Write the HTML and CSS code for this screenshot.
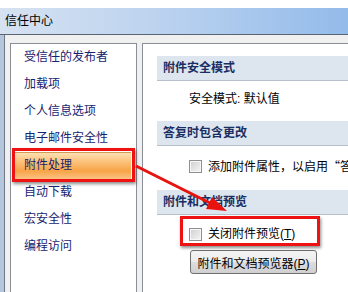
FILE: index.html
```html
<!DOCTYPE html>
<html lang="zh-CN">
<head>
    <meta charset="UTF-8">
    <title>信任中心</title>
    <link rel="stylesheet" href="styles.css">
</head>
<body>
    <div class="window">
        <div class="titlebar">信任中心</div>

        <div class="frame">
            <!-- Left category list -->
            <ul class="nav">
                <li>受信任的发布者</li>
                <li>加载项</li>
                <li>个人信息选项</li>
                <li>电子邮件安全性</li>
                <li class="selected">附件处理</li>
                <li>自动下载</li>
                <li>宏安全性</li>
                <li>编程访问</li>
            </ul>

            <!-- Right settings panel -->
            <div class="content">
                <div class="section-head">附件安全模式</div>
                <div class="section-body">
                    <div class="row">安全模式: 默认值</div>
                </div>

                <div class="section-head">答复时包含更改</div>
                <div class="section-body">
                    <label class="row"><span class="check"></span><span class="cjk">添加附件属性，以启用“答复时包含更改”</span></label>
                </div>

                <div class="section-head">附件和文档预览</div>
                <div class="section-body last">
                    <label class="row marked"><span class="check"></span><span>关闭附件预览(<u>T</u>)</span></label>
                    <button class="btn">附件和文档预览器(<u>P</u>)</button>
                </div>
            </div>
        </div>

        <svg class="arrow" width="348" height="292" viewBox="0 0 348 292">
            <line x1="136" y1="166" x2="214" y2="205" stroke="#e8130f" stroke-width="3"/>
            <polygon points="227,211 206,209 212,197" fill="#e8130f"/>
        </svg>
    </div>
</body>
</html>
```

FILE: styles.css
```css
body {
    margin: 0;
    padding: 0;
    font-family: "Liberation Sans", "Noto Sans CJK SC", sans-serif;
    font-size: 12px;
}

.window {
    position: relative;
    width: 348px;
    height: 292px;
    overflow: hidden;
    background: #f0f0f0;
}

.titlebar {
    height: 26px;
    padding: 8px 0 0 5px;
    line-height: 26px;
    font-size: 12px;
    color: #000;
    background: linear-gradient(to right, #d6e2f1, #bcd3ef 45%, #93bbea);
    box-shadow: inset 0 8px 0 #fff;
    border-bottom: 1px solid #5a6472;
}

.frame {
    display: flex;
    gap: 5px;
    height: 257px;
    padding: 8px 0 0 6px;
    border-left: 4px solid #b3c6dc;
    box-shadow: inset 1px 0 0 #6f7886;
    box-sizing: border-box;
}

.nav {
    list-style: none;
    margin: 0;
    padding: 0;
    width: 125px;
    flex: none;
    background: #fff;
    border: 1px solid #8a8e96;
    border-bottom: none;
}

.nav li {
    height: 27px;
    line-height: 27px;
    padding-left: 13px;
    color: #17236f;
    white-space: nowrap;
}

.nav li.selected {
    position: relative;
    margin: 0 5px 0 4px;
    padding-left: 9px;
    background: linear-gradient(to bottom, #fde3b8, #fbc27c 35%, #f8a448 70%, #fbc283);
    box-shadow: inset 0 1px 0 #d29a52;
}

.nav li.selected::after {
    content: "";
    position: absolute;
    left: -3px;
    top: -4px;
    right: -4px;
    bottom: -3px;
    border: 3px solid #ee1212;
    box-shadow: 1px 2px 3px rgba(0, 0, 0, 0.45);
}

.content {
    flex: none;
    width: 320px;
    padding: 12px 0 0 14px;
    background: #fff;
    border: 1px solid #8a8e96;
    border-right: none;
    border-bottom: none;
}

.section-head {
    height: 24px;
    line-height: 24px;
    padding-left: 6px;
    font-weight: bold;
    color: #1b2e63;
    background: #dde6ee;
    border-bottom: 1px solid #b7bfca;
}

.section-body {
    padding: 10px 0 14px 32px;
}

.row {
    position: relative;
    display: flex;
    align-items: center;
    gap: 6px;
    height: 16px;
    line-height: 16px;
    color: #000;
    white-space: nowrap;
}

label.row {
    margin-top: 2px;
    margin-bottom: 2px;
}

.cjk {
    font-family: "Noto Sans CJK SC", sans-serif;
}

.check {
    width: 11px;
    height: 11px;
    flex: none;
    border: 1px solid #8f8f8f;
    background: linear-gradient(135deg, #cfcfcf, #f6f6f6);
    box-shadow: inset 0 0 0 1px #f7f7f7;
}

.section-body.last {
    padding-top: 9px;
}

.row.marked::after {
    content: "";
    position: absolute;
    left: -9px;
    top: -10px;
    width: 140px;
    height: 30px;
    box-sizing: border-box;
    border: 3px solid #ee1212;
    box-shadow: 1px 2px 3px rgba(0, 0, 0, 0.45);
}

.btn {
    display: block;
    margin: 8px 0 0 1px;
    width: 127px;
    height: 24px;
    padding: 0;
    font-family: inherit;
    font-size: 12px;
    color: #000;
    border: 1px solid #707070;
    border-radius: 3px;
    background: linear-gradient(to bottom, #f4f4f4, #ebebeb 50%, #dddddd 51%, #d0d0d0);
}

.arrow {
    position: absolute;
    left: 0;
    top: 0;
    pointer-events: none;
}
```
